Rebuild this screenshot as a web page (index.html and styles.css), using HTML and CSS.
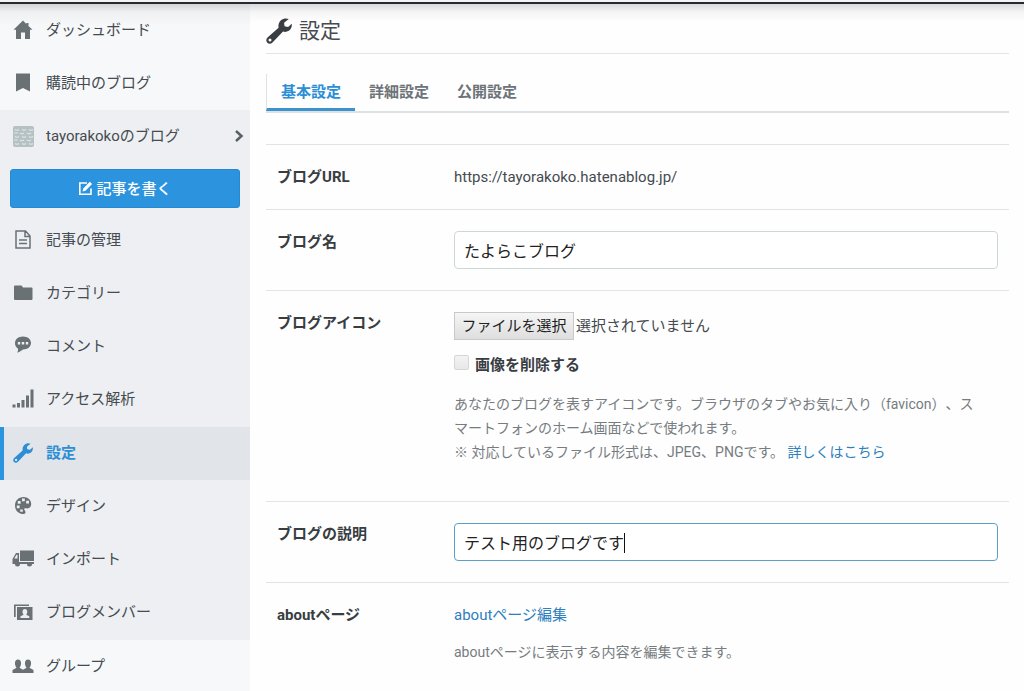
FILE: index.html
```html
<!DOCTYPE html>
<html lang="ja">
<head>
<meta charset="utf-8">
<meta name="viewport" content="width=device-width, initial-scale=1">
<title>設定</title>
<link rel="stylesheet" href="styles.css">
</head>
<body>
<svg class="symbols" aria-hidden="true">
  <symbol id="wrench" viewBox="0 0 24 24">
    <path fill-rule="evenodd" d="M16.500.6c1.600-.4 3.300-.2 4.500.4l-4.300 3.400.4 3.200 3.300.6 3.400-3c.4 3-.8 5.600-3.200 6.900-1.700.9-3.400.9-4.900.3L6 22.600c-1.400 1.400-3.500 1.500-4.800.2-1.300-1.300-1.200-3.400.2-4.800L11.600 8.900c-.7-3.700 1.400-7.300 4.900-8.300zM3.700 18.900a1.400 1.400 0 1 0 0 2.800 1.400 1.400 0 0 0 0-2.800z"/>
  </symbol>
</svg>
<div class="topbar"></div>
<div class="layout">
  <nav class="sidebar">
    <a class="item" href="#"><svg class="icon" viewBox="0 0 22 22"><path d="M11 1.500 1.500 10.800H4V20h5v-6.500h4V20h5v-9.200h2.500L16.500 7V4h-2.200v1z"/></svg>ダッシュボード</a>
    <a class="item" href="#"><svg class="icon" viewBox="0 0 22 22"><path d="M4 1.500h14v18l-7-3.500-7 3.500z"/></svg>購読中のブログ</a>
    <div class="blog">
      <a class="item" href="#"><svg class="icon" viewBox="0 0 22 22"><rect class="avatar" x="1" y="1" width="21" height="21" rx="2"/><path class="waves" d="M3 4.500q2 1.500 4 0M10 4.500q2 1.500 4 0M17 4.500q2 1.500 4 0M2 8h4M8 8q2 1.500 4 0M15 8q2 1.500 4 0M3 11.500q2 1.500 4 0M10 11.500q2 1.500 4 0M17 11.500q2 1.500 4 0M2 15h4M8 15q2 1.500 4 0M15 15q2 1.500 4 0M3 18.500q2 1.500 4 0M10 18.500q2 1.500 4 0M17 18.500q2 1.500 4 0"/></svg>tayorakokoのブログ<svg class="chevron" viewBox="0 0 10 14"><path d="m2 2 5.500 5L2 12"/></svg></a>
      <button class="write" type="button"><svg class="pen" viewBox="0 0 15 15"><path d="M9 2H1.800v11.200H13V7.500"/><path class="nib" d="m4.500 10.500.8-3L11.800.8l2.300 2.300-6.600 6.600z"/></svg>記事を書く</button>
      <a class="item" href="#"><svg class="icon" viewBox="0 0 22 22"><path class="line" d="M4 2h9.500l4.500 5v12H4zM13 2v5.500h5M7 11h8M7 14.500h8"/></svg>記事の管理</a>
      <a class="item" href="#"><svg class="icon" viewBox="0 0 22 22"><path d="M2 4.500q0-1 1-1h6.500l1.500 2h8.500q1 0 1 1V17q0 1-1 1H3q-1 0-1-1z"/></svg>カテゴリー</a>
      <a class="item" href="#"><svg class="icon" viewBox="0 0 22 22"><path fill-rule="evenodd" d="M11 1.500c4.500 0 8 2.800 8 6.500s-3.500 6.500-8 6.500c-2 1.500-4 2.800-6 3 1-1 1.300-2.500.9-4C4 12.300 3 10.300 3 8c0-3.700 3.500-6.500 8-6.500zM5.800 7v2.400h2.400V7zm4 0v2.400h2.400V7zm4 0v2.400h2.400V7z"/></svg>コメント</a>
      <a class="item" href="#"><svg class="icon" viewBox="0 0 22 22"><path d="M.5 16.500h3v3h-3zM5 15h3v4.500H5zM9.500 12h3v7.500h-3zM14 7.500h3v12h-3zM18.500 1.500h3v18h-3z"/></svg>アクセス解析</a>
      <a class="item active" href="#" aria-current="page"><svg class="icon"><use href="#wrench" x="1" width="20" height="22"/></svg>設定</a>
      <a class="item" href="#"><svg class="icon" viewBox="0 0 22 22"><path fill-rule="evenodd" d="M11.500 2C16 2 19.200 5 19.200 9c0 3-2 5-5 4.300-2-.4-2.500.8-1.500 2 1.400 1.700 1 3.700-1.500 3.700C6.500 19 3 15.500 3 10.500S6.800 2 11.500 2zM10 3.500v2.800h2.800V3.500zm4.200 2.200v2.800H17V5.700zM5.800 6v2.800h2.800V6zm-1 4.500v2.800h2.800v-2.800zm3.400 4v2.300h2.600v-2.300z"/></svg>デザイン</a>
      <a class="item" href="#"><svg class="icon" viewBox="0 0 22 22"><path fill-rule="evenodd" d="M8 2.500h14V13H8zM4 5h3v9h15v2h-2a2.500 2.500 0 0 1-5 0H8a2.500 2.500 0 0 1-5 0H.500V11zm.5 1.800L2.300 10.500h3.200V6.800z"/></svg>インポート</a>
      <a class="item" href="#"><svg class="icon" viewBox="0 0 22 22"><path d="M2 3.500h15V5H3.700v11H2z"/><path fill-rule="evenodd" d="M5 6h15.500v13H5zm3.500 11h8.800v-1.700l-3.100-1.600c1.800-2.200 1.300-5.700-1.300-5.700s-3.100 3.500-1.300 5.700l-3.100 1.600z"/></svg>ブログメンバー</a>
    </div>
    <a class="item" href="#"><svg class="icon" viewBox="0 0 22 22"><path d="M.500 18v-3l4-2.200C2 9.500 2.500 4.500 6 4.500s4 5 1.500 8.300l3.500 1.900 3.500-1.900C12 9.500 12.500 4.500 16 4.500s4 5 1.500 8.300l4 2.200v3z"/></svg>グループ</a>
  </nav>
  <main class="main">
    <h1 class="title"><svg class="title-icon"><use href="#wrench" width="26" height="26"/></svg>設定</h1>
    <div class="tabs">
      <a class="tab current" href="#">基本設定</a>
      <a class="tab" href="#">詳細設定</a>
      <a class="tab" href="#">公開設定</a>
    </div>
    <form class="settings">
      <div class="row">
        <div class="label">ブログURL</div>
        <div class="url">https://tayorakoko.hatenablog.jp/</div>
      </div>
      <div class="row">
        <label class="label" for="name">ブログ名</label>
        <input class="field" id="name" type="text" value="たよらこブログ">
      </div>
      <div class="row">
        <div class="label">ブログアイコン</div>
        <div>
          <div class="file"><button class="file-button" type="button">ファイルを選択</button><span>選択されていません</span></div>
          <div class="check"><input class="box" id="remove" type="checkbox"><label for="remove">画像を削除する</label></div>
          <p class="help spaced">あなたのブログを表すアイコンです。ブラウザのタブやお気に入り（favicon）、スマートフォンのホーム画面などで使われます。<br>※ 対応しているファイル形式は、JPEG、PNGです。 <a class="link" href="#">詳しくはこちら</a></p>
        </div>
      </div>
      <div class="row">
        <label class="label" for="description">ブログの説明</label>
        <div class="focus-wrap">
          <input class="field focused" id="description" type="text" value="テスト用のブログです">
          <span class="caret"></span>
        </div>
      </div>
      <div class="row">
        <div class="label">aboutページ</div>
        <div>
          <a class="link" href="#">aboutページ編集</a>
          <p class="help about">aboutページに表示する内容を編集できます。</p>
        </div>
      </div>
    </form>
  </main>
</div>
</body>
</html>
```
FILE: styles.css
```css
* { box-sizing: border-box; }

body {
  margin: 0;
  background: #fefefe;
  color: #454b50;
  font: 15px/22px Roboto, "Noto Sans CJK JP", sans-serif;
  text-spacing-trim: space-all;
  line-break: strict;
  overflow: hidden;
}

a { color: inherit; text-decoration: none; }

.symbols { position: absolute; width: 0; height: 0; }

.topbar {
  height: 4px;
  border-top: 2px solid #f3f4f6;
  background: #292a2f;
}

.layout {
  display: flex;
  min-height: 100vh;
  background: linear-gradient(#d9dadb, #f5f5f5 8px, #fefefe 18px);
}

/* Sidebar */
.sidebar {
  flex: 0 0 250px;
  background: linear-gradient(#d3d5d7, #eef0f2 8px, #f6f8fa 22px);
}

.item {
  display: flex;
  align-items: center;
  gap: 12px;
  height: 53px;
  padding: 0 6px 2px 12px;
}

.icon { flex: none; width: 22px; height: 22px; fill: #697175; }
.line { fill: none; stroke: #697175; stroke-width: 1.5; }
.avatar { fill: #b5c1c3; }
.waves { fill: none; stroke: #dde5e6; stroke-width: 1.2; }

.blog { padding-bottom: 1px; background: #edeff2; }

.chevron {
  width: 10px;
  height: 14px;
  margin-left: auto;
  fill: none;
  stroke: #596065;
  stroke-width: 2.5;
}

.write {
  display: flex;
  align-items: center;
  justify-content: center;
  gap: 3px;
  width: 230px;
  height: 39px;
  margin: 6px 10px;
  border: 1px solid #2589d2;
  border-radius: 3px;
  background: #2c94df;
  color: #fff;
  font: 500 15px/22px Roboto, "Noto Sans CJK JP", sans-serif;
}

.pen { width: 15px; height: 15px; fill: none; stroke: #fff; stroke-width: 1.6; }
.nib { fill: #fff; stroke: none; }

.active {
  margin-top: 1px;
  padding-left: 8px;
  border-left: 4px solid #2c94df;
  background: #e1e4e9;
  color: #2c8fd6;
  font-weight: 700;
}
.active .icon { fill: #2c8fd6; }

/* Settings page */
.main { flex: 1; min-width: 0; padding: 0 15px 0 16px; }

.title {
  display: flex;
  align-items: center;
  gap: 7px;
  height: 50px;
  margin: 0;
  padding-top: 5px;
  border-bottom: 1px solid #dfe4e6;
  font-size: 21px;
  font-weight: 400;
}

.title-icon { width: 26px; height: 26px; fill: #3a3e43; }

.tabs {
  display: flex;
  margin-top: 20px;
  border-bottom: 2px solid #dce1e4;
}

.tab {
  padding: 7px 14px 5px;
  color: #6d7378;
  font-weight: 700;
}

.current {
  border-left: 1px solid #dce1e4;
  border-bottom: 3px solid #3e92cc;
  color: #2c8fd6;
}

.settings { margin-top: 31px; }

.row {
  display: grid;
  grid-template-columns: 177px 1fr;
  padding: 21px 11px;
  border-top: 1px solid #dfe4e6;
}

.label { color: #383d42; font-weight: 700; }

.field {
  width: 100%;
  height: 38px;
  padding: 0 9px;
  border: 1px solid #cdd7da;
  border-radius: 4px;
  background: #fff;
  color: #222;
  font: 16px/24px Roboto, "Noto Sans CJK JP", sans-serif;
  outline: none;
}
.focused { border-color: #5ba1c7; }
.focus-wrap { position: relative; }

.caret {
  position: absolute;
  top: 10px;
  left: 170px;
  width: 1px;
  height: 20px;
  background: #111;
}

.file { display: flex; align-items: center; gap: 2px; }

.file-button {
  width: 120px;
  height: 28px;
  padding: 0;
  border: 1px solid #c7c9ca;
  background: linear-gradient(#f5f5f5, #dedede);
  color: #222;
  font: 15px/22px Roboto, "Noto Sans CJK JP", sans-serif;
}

.check {
  display: flex;
  gap: 6px;
  margin-top: 14px;
  color: #383d42;
  font-weight: 700;
}

.box {
  appearance: none;
  width: 15px;
  height: 15px;
  margin: 1px 0 0;
  border: 1px solid #d5d6d7;
  border-radius: 2px;
  background: linear-gradient(#f3f3f3, #e8e8e8);
}

.help { margin: 0; color: #767c80; font-size: 14px; line-height: 24px; }
.spaced { padding: 16px 0; }
.about { margin-top: 14px; }
.link { color: #2d7fbd; }
```
